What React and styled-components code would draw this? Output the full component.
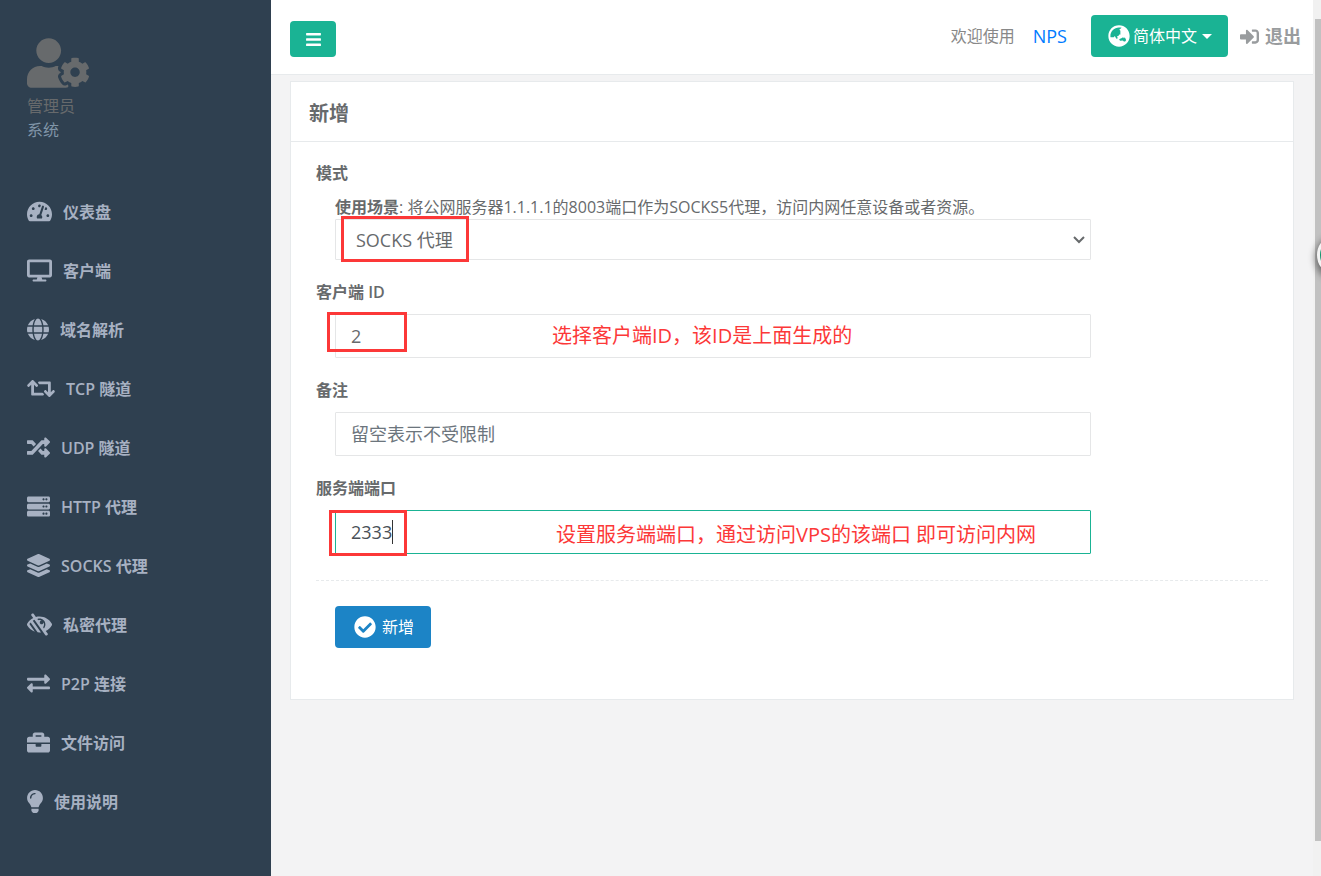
import React from 'react'
import styled, { createGlobalStyle } from 'styled-components'
import {
  FaUserCog,
  FaTachometerAlt,
  FaDesktop,
  FaGlobe,
  FaRetweet,
  FaRandom,
  FaServer,
  FaLayerGroup,
  FaLowVision,
  FaExchangeAlt,
  FaBriefcase,
  FaLightbulb,
  FaBars,
  FaGlobeAsia,
  FaSignInAlt,
  FaCheckCircle,
} from 'react-icons/fa'

const GlobalStyle = createGlobalStyle`
* { box-sizing:border-box; }
body {
  margin:0;
  background:#f3f3f4;
  color:#676a6c;
  font-family:"Open Sans","Noto Sans CJK SC",sans-serif;
  font-size:16px;
  line-height:24px;
}
a { text-decoration:none; }
`;

const Container = styled.div`
display:flex;
min-height:100vh;
overflow:hidden;
`;

const Sidebar = styled.nav`
flex:0 0 271px;
background:#2f4050;
`;
const Profile = styled.div`
display:flex;
flex-direction:column;
align-items:flex-start;
padding:38px 27px 40px;
svg{
  width:62px;
  height:50px;
  margin-bottom:6px;
}
`;
const ProfileName = styled.span``;
const ProfileRole = styled.span`
color:#8095a8;
`;
const Menu = styled.ul`
margin:0;
padding:0;
list-style:none;
`;
const MenuLink = styled.a`
display:flex;
align-items:center;
gap:11px;
height:59px;
padding-left:27px;
color:#a7b1c2;
font-weight:600;
svg{
  width:${props => props.$iconWidth}px;
  height:23px;
}
`;

const Main = styled.main`
flex:1;
min-width:0;
background:#f3f3f4;
`;
const TopBar = styled.header`
display:flex;
align-items:center;
justify-content:space-between;
height:75px;
padding:0 12px 2px 19px;
background:#fff;
border-bottom:1px solid #e7eaec;
`;
const ToggleButton = styled.button`
display:flex;
align-items:center;
justify-content:center;
width:46px;
height:36px;
margin-top:6px;
border:0;
border-radius:4px;
background:#1ab394;
color:#fff;
font-size:17px;
`;
const TopLinks = styled.div`
display:flex;
align-items:center;
`;
const Welcome = styled.span`
margin-right:18px;
color:#888;
`;
const SiteLink = styled.a`
margin-right:24px;
color:#007bff;
font-size:18px;
`;
const LanguageButton = styled.button`
display:flex;
align-items:center;
gap:3px;
height:42px;
margin-right:12px;
padding:0 16px 0 17px;
border:0;
border-radius:4px;
background:#1ab394;
color:#fff;
font:inherit;
svg{
  font-size:22px;
}
`;
const Caret = styled.i`
margin-left:2px;
border:5px solid transparent;
border-top-color:#fff;
border-bottom:0;
`;
const LogoutLink = styled.a`
display:flex;
align-items:center;
gap:6px;
color:#999c9e;
font-size:18px;
font-weight:700;
svg{
  font-size:19px;
}
`;

const Card = styled.section`
margin:6px 19px 0;
border:1px solid #e7eaec;
background:#fff;
`;
const CardTitle = styled.h1`
margin:0;
padding:20px 18px 15px;
border-bottom:1px solid #e7eaec;
font-size:20px;
font-weight:700;
line-height:24px;
`;
const Form = styled.form`
padding:19px 25px 51px;
`;
const Field = styled.div`
margin-bottom:20px;
`;
const Label = styled.label`
display:block;
margin-bottom:10px;
font-weight:600;
`;
const Control = styled.div`
position:relative;
max-width:794px;
padding:0 19px;
`;
const Hint = styled.p`
margin:0;
`;
const Input = styled.input`
display:block;
width:100%;
height:44px;
padding:0 15px;
border:1px solid ${props => props.$active ? "#1ab394" : "#e5e6e7"};
border-radius:1px;
outline:0;
background:#fff;
color:${props => props.$active ? "#495057" : "#676a6c"};
font:inherit;
font-size:18px;
&::placeholder{
  color:#6c757d;
}
`;
const Select = styled.select`
display:block;
width:100%;
height:41px;
padding:0 20px;
border:1px solid #e5e6e7;
border-radius:1px;
background:#fff;
color:inherit;
font:inherit;
font-size:18px;
appearance:none;
`;
const SelectArrow = styled.svg`
position:absolute;
right:25px;
bottom:16px;
width:12px;
height:8px;
fill:none;
stroke:#676a6c;
stroke-width:2;
pointer-events:none;
`;
const Mark = styled.div`
position:absolute;
left:${props => props.$left}px;
bottom:${props => props.$bottom}px;
width:${props => props.$width}px;
height:${props => props.$height}px;
border:3px solid #fc3838;
pointer-events:none;
`;
const Note = styled.span`
position:absolute;
left:${props => props.$left}px;
top:${props => props.$top}px;
color:#fc3838;
font-size:20px;
line-height:28px;
white-space:nowrap;
`;
const Cursor = styled.i`
position:absolute;
left:76px;
top:10px;
width:1px;
height:24px;
background:#333;
`;
const Divider = styled.hr`
margin:26px 0 25px;
border:0;
border-top:1px dashed #e7eaec;
`;
const SubmitButton = styled.button`
display:flex;
align-items:center;
gap:6px;
height:42px;
margin-left:19px;
padding:0 17px 0 19px;
border:0;
border-radius:4px;
background:#1c84c6;
color:#fff;
font:inherit;
svg{
  font-size:22px;
}
`;

const ScrollTrack = styled.div`
position:relative;
flex:0 0 8px;
padding:19px 0 0 2px;
background:#f1f1f1;
`;
const ScrollThumb = styled.div`
height:822px;
background:#c1c1c1;
`;
const FloatingBall = styled.div`
position:absolute;
top:234px;
left:4px;
width:42px;
height:42px;
border:3px solid #f4f4f4;
border-radius:50%;
background:#11936c;
box-shadow:0 3px 7px 2px rgba(0,0,0,.45);
`;

const menuItems = [
  { icon: FaTachometerAlt, width: 25, text: '仪表盘' },
  { icon: FaDesktop, width: 25, text: '客户端' },
  { icon: FaGlobe, width: 22, text: '域名解析' },
  { icon: FaRetweet, width: 28, text: 'TCP 隧道' },
  { icon: FaRandom, width: 23, text: 'UDP 隧道' },
  { icon: FaServer, width: 23, text: 'HTTP 代理' },
  { icon: FaLayerGroup, width: 23, text: 'SOCKS 代理' },
  { icon: FaLowVision, width: 25, text: '私密代理' },
  { icon: FaExchangeAlt, width: 23, text: 'P2P 连接' },
  { icon: FaBriefcase, width: 23, text: '文件访问' },
  { icon: FaLightbulb, width: 16, text: '使用说明' },
];

const App = () => {
  return (
    <Container>
        <GlobalStyle/>
        <Sidebar>
          <Profile>
            <FaUserCog/>
            <ProfileName>管理员</ProfileName>
            <ProfileRole>系统</ProfileRole>
          </Profile>
          <Menu>
            {menuItems.map(({ icon: Icon, width, text }) => (
              <li key={text}>
                <MenuLink href="#" $iconWidth={width}><Icon/>{text}</MenuLink>
              </li>
            ))}
          </Menu>
        </Sidebar>
        <Main>
          <TopBar>
            <ToggleButton type="button" aria-label="菜单"><FaBars/></ToggleButton>
            <TopLinks>
              <Welcome>欢迎使用</Welcome>
              <SiteLink href="#">NPS</SiteLink>
              <LanguageButton type="button"><FaGlobeAsia/>简体中文<Caret/></LanguageButton>
              <LogoutLink href="#"><FaSignInAlt/>退出</LogoutLink>
            </TopLinks>
          </TopBar>
          <Card>
            <CardTitle>新增</CardTitle>
            <Form>
              <Field>
                <Label htmlFor="type">模式</Label>
                <Control>
                  <Hint><b>使用场景</b>: 将公网服务器1.1.1.1的8003端口作为SOCKS5代理，访问内网任意设备或者资源。</Hint>
                  <Select id="type">
                    <option>SOCKS 代理</option>
                  </Select>
                  <SelectArrow viewBox="0 0 12 8"><path d="M1 1l5 5 5-5"/></SelectArrow>
                  <Mark $left={25} $bottom={-2} $width={128} $height={46}/>
                </Control>
              </Field>
              <Field>
                <Label htmlFor="client_id">客户端 ID</Label>
                <Control>
                  <Input id="client_id" type="text" defaultValue="2"/>
                  <Mark $left={11} $bottom={6} $width={80} $height={40}/>
                  <Note $left={236} $top={8}>选择客户端ID，该ID是上面生成的</Note>
                </Control>
              </Field>
              <Field>
                <Label htmlFor="remark">备注</Label>
                <Control>
                  <Input id="remark" type="text" placeholder="留空表示不受限制"/>
                </Control>
              </Field>
              <Field>
                <Label htmlFor="port">服务端端口</Label>
                <Control>
                  <Input id="port" type="text" defaultValue="2333" $active/>
                  <Cursor/>
                  <Mark $left={13} $bottom={-2} $width={78} $height={46}/>
                  <Note $left={240} $top={11}>设置服务端端口，通过访问VPS的该端口 即可访问内网</Note>
                </Control>
              </Field>
              <Divider/>
              <SubmitButton type="button"><FaCheckCircle/>新增</SubmitButton>
            </Form>
          </Card>
        </Main>
        <ScrollTrack>
          <ScrollThumb/>
          <FloatingBall/>
        </ScrollTrack>
    </Container>
  )
}

export default App
